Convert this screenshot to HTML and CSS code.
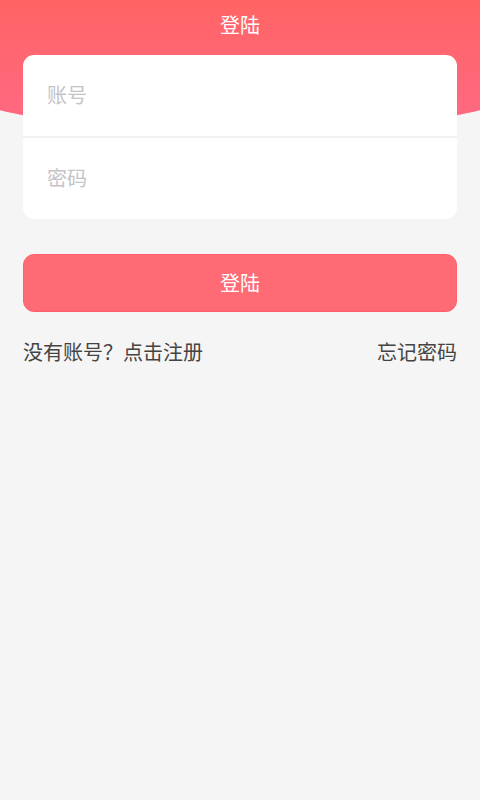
FILE: index.html
```html
<!DOCTYPE html>
<html lang="zh">
<head>
<meta charset="utf-8">
<title>登陆</title>
<link rel="stylesheet" href="styles.css">
</head>
<body>
<div class="page">
  <header class="header">
    <h1 class="title">登陆</h1>
  </header>
  <main class="content">
    <form class="card">
      <div class="field"><input class="input" type="text" placeholder="账号"></div>
      <div class="divider"></div>
      <div class="field"><input class="input" type="password" placeholder="密码"></div>
    </form>
    <button class="login-btn" type="button">登陆</button>
    <div class="links">
      <span class="link">没有账号？点击注册</span>
      <span class="link">忘记密码</span>
    </div>
  </main>
</div>
</body>
</html>
```
FILE: styles.css
```css
* { box-sizing: border-box; }
html, body {
  margin: 0;
  padding: 0;
  background: #f5f5f5;
  font-family: "Noto Sans CJK SC", "Noto Sans", sans-serif;
}
.page {
  width: 480px;
  min-height: 800px;
  background: #f5f5f5;
  overflow: hidden;
}
.header {
  height: 140px;
  background: linear-gradient(to bottom, #ff6464, #ff6a87);
  clip-path: ellipse(410px 136px at 50% 0);
  padding-top: 10px;
}
.title {
  margin: 0;
  text-align: center;
  color: #ffffff;
  font-size: 20px;
  font-weight: 400;
  line-height: 30px;
}
.content {
  position: relative;
  z-index: 1;
  margin-top: -85px;
  padding: 0 23px;
}
.card {
  margin: 0;
  background: #ffffff;
  border-radius: 11px;
  display: flex;
  flex-direction: column;
}
.field {
  height: 81px;
  display: flex;
  align-items: center;
  padding: 0 24px 2px;
}
.divider {
  height: 2px;
  background: #f1f1f1;
}
.input {
  border: none;
  outline: none;
  background: transparent;
  width: 100%;
  font-family: inherit;
  font-size: 20px;
  color: #333;
  padding: 0;
}
.input::placeholder { color: #c4c4c8; }
.login-btn {
  display: block;
  width: 100%;
  height: 58px;
  margin-top: 35px;
  border: 1px solid #ff5e6a;
  border-radius: 11px;
  background: #ff6b75;
  color: #ffffff;
  font-family: inherit;
  font-size: 20px;
  padding: 0 0 2px;
}
.links {
  display: flex;
  justify-content: space-between;
  margin-top: 25px;
}
.link {
  font-size: 20px;
  color: #444444;
  line-height: 30px;
}
```
